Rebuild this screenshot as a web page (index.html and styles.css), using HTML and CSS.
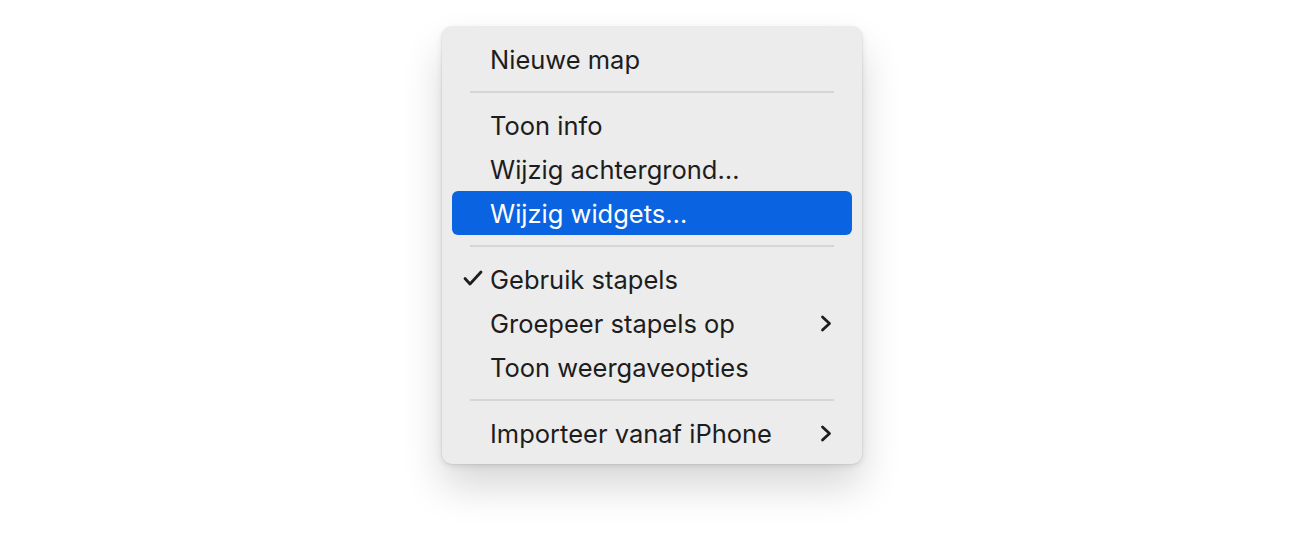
FILE: index.html
```html
<!DOCTYPE html>
<html lang="nl">
<head>
<meta charset="utf-8">
<title>Menu</title>
<link rel="stylesheet" href="styles.css">
</head>
<body>
<div class="stage">
  <div class="menu">
    <div class="item"><span class="label">Nieuwe map</span></div>
    <div class="sep"></div>
    <div class="item"><span class="label">Toon info</span></div>
    <div class="item"><span class="label">Wijzig achtergrond…</span></div>
    <div class="item active"><span class="label">Wijzig widgets…</span></div>
    <div class="sep"></div>
    <div class="item">
      <svg class="check" viewBox="0 0 20 16" width="20" height="16"><path d="M2 8.5 L7 14 L18 2" fill="none" stroke="#1e1e1e" stroke-width="2.8" stroke-linecap="round" stroke-linejoin="round"/></svg>
      <span class="label">Gebruik stapels</span>
    </div>
    <div class="item">
      <span class="label">Groepeer stapels op</span>
      <svg class="chev" viewBox="0 0 12 17" width="12" height="17"><path d="M2.5 2 L9.5 8.5 L2.5 15" fill="none" stroke="#1e1e1e" stroke-width="2.8" stroke-linecap="round" stroke-linejoin="round"/></svg>
    </div>
    <div class="item"><span class="label">Toon weergaveopties</span></div>
    <div class="sep"></div>
    <div class="item">
      <span class="label">Importeer vanaf iPhone</span>
      <svg class="chev" viewBox="0 0 12 17" width="12" height="17"><path d="M2.5 2 L9.5 8.5 L2.5 15" fill="none" stroke="#1e1e1e" stroke-width="2.8" stroke-linecap="round" stroke-linejoin="round"/></svg>
    </div>
  </div>
</div>
</body>
</html>
```
FILE: styles.css
```css
html, body {
  margin: 0;
  padding: 0;
  background: #ffffff;
}
.stage {
  width: 1300px;
  height: 541px;
  padding-top: 27px;
  padding-left: 442px;
  box-sizing: border-box;
}
.menu {
  width: 420px;
  box-sizing: border-box;
  padding: 10px 10px 9px 10px;
  background: #ececec;
  border-radius: 10px;
  box-shadow: 0 0 0 1px rgba(0,0,0,0.04), 0 2px 6px rgba(0,0,0,0.10), 0 22px 40px rgba(0,0,0,0.16);
  font-family: Inter, "Liberation Sans", sans-serif;
  font-size: 25.5px;
  letter-spacing: 0;
  color: #1d1d1d;
}
.item {
  position: relative;
  height: 44px;
  display: flex;
  align-items: center;
  padding-left: 38px;
  padding-right: 20px;
  border-radius: 6px;
}
.item .label {
  flex: 1;
  white-space: nowrap;
}
.item.active {
  background: #0a63e0;
  color: #ffffff;
}
.check {
  position: absolute;
  left: 11px;
  top: 13px;
}
.chev {
  flex: none;
}
.sep {
  height: 2px;
  margin: 10px 18px 10px 18px;
  background: #d6d6d6;
}
```
